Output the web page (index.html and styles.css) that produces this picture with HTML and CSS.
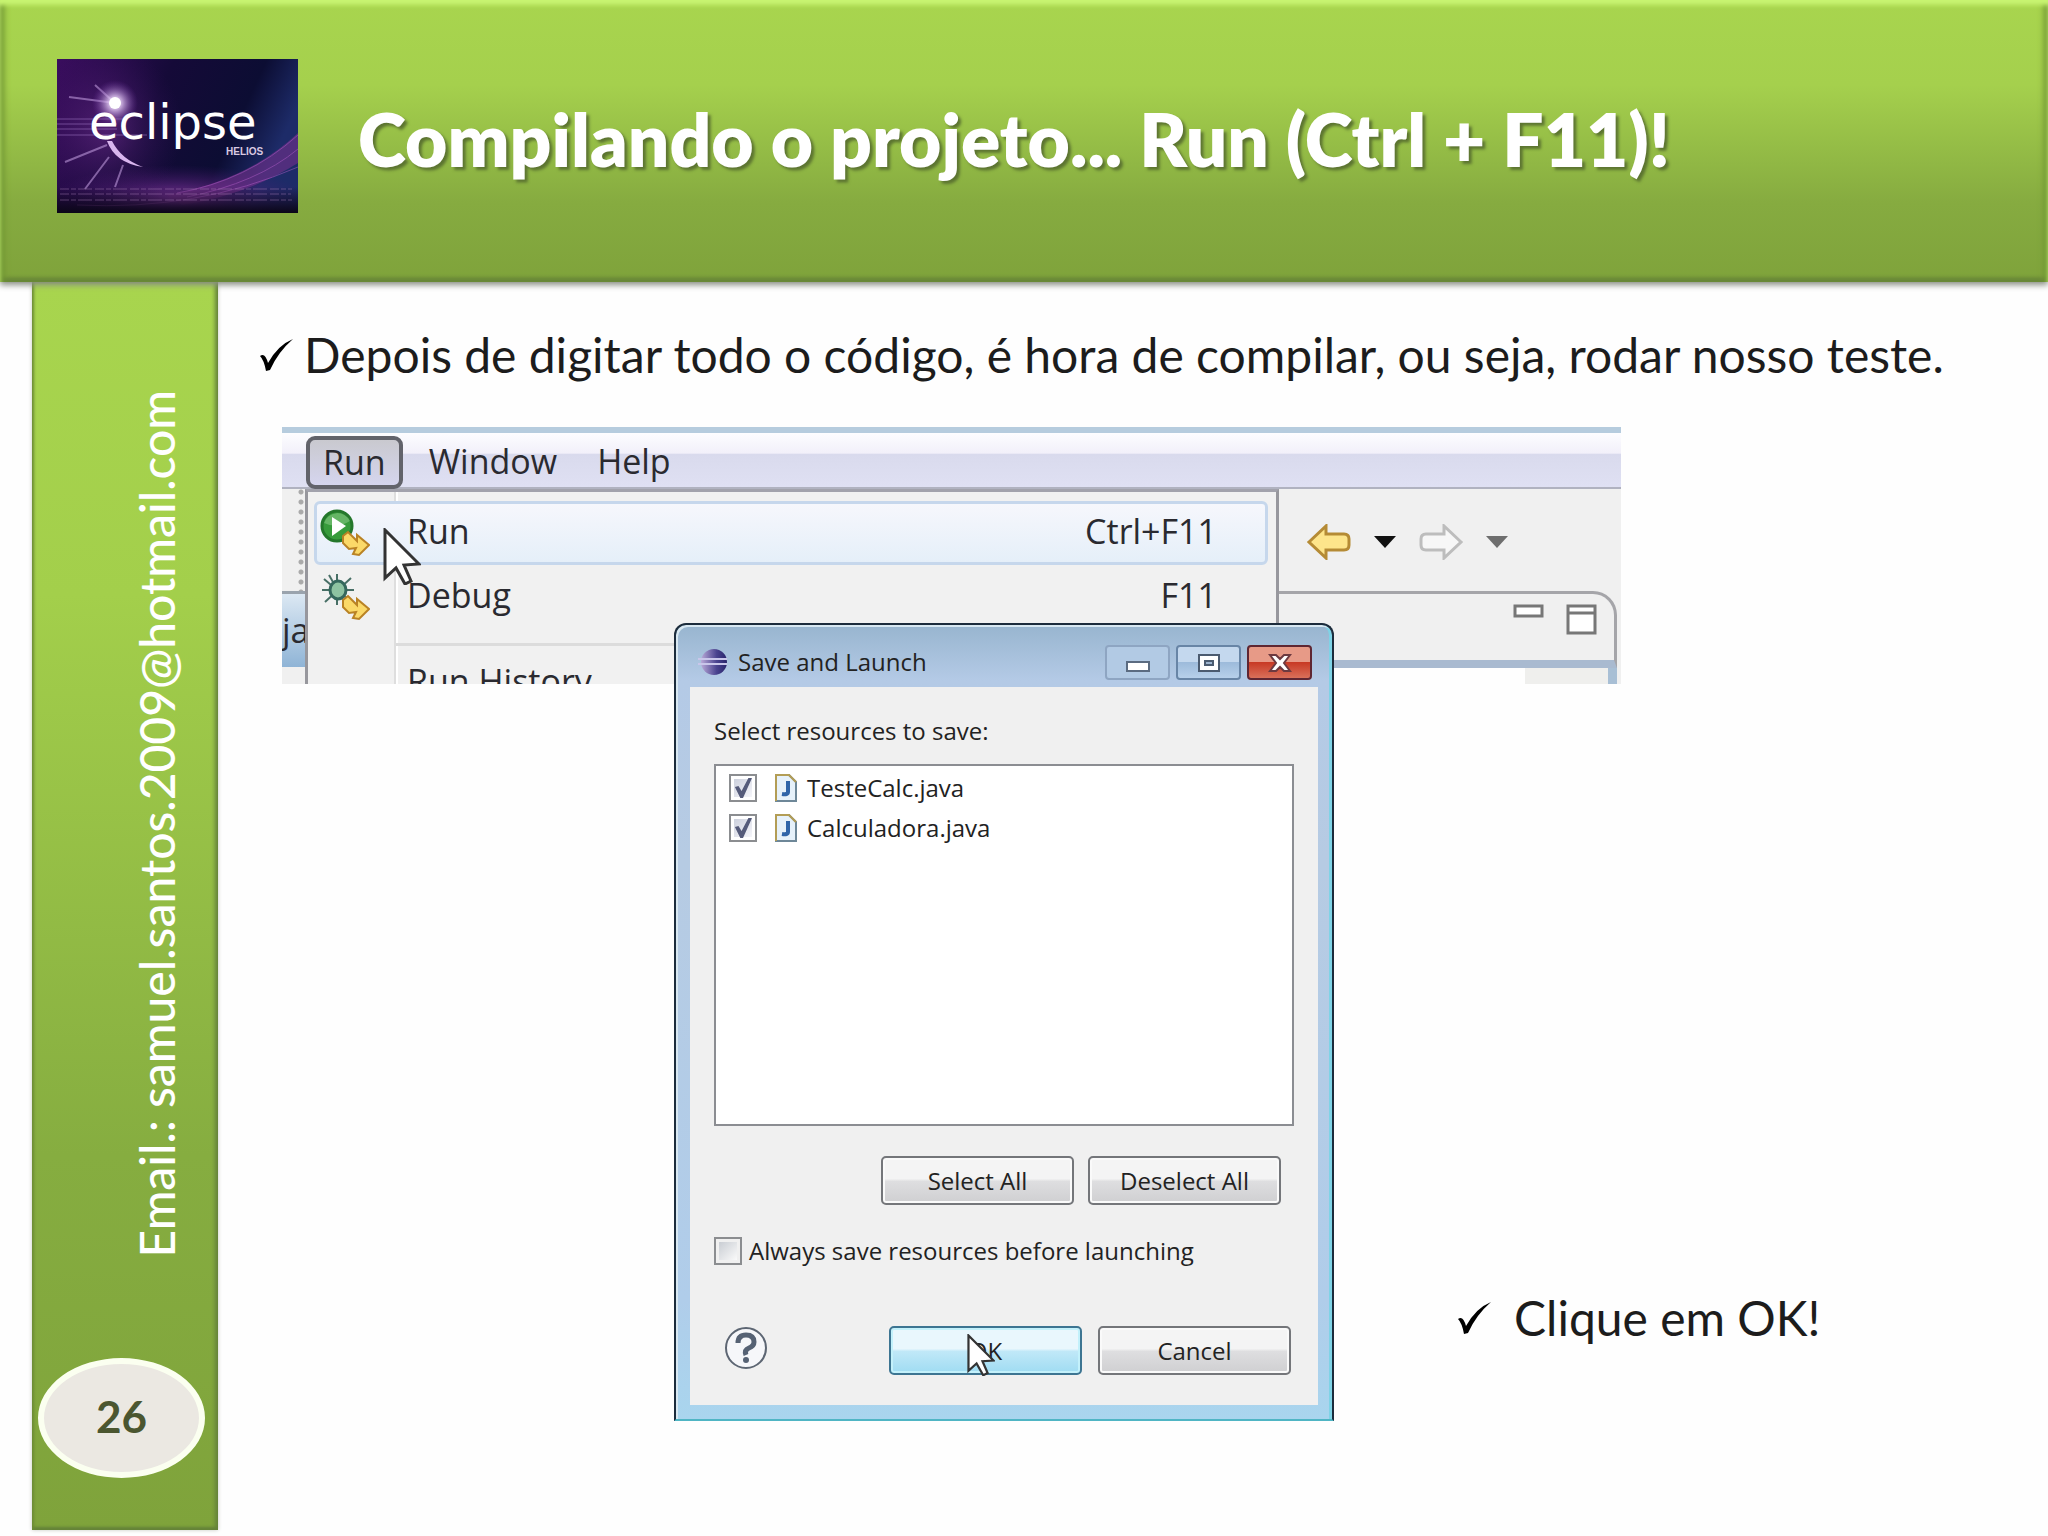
FILE: index.html
```html
<!DOCTYPE html>
<html lang="pt-BR">
<head>
<meta charset="utf-8">
<title>Compilando o projeto</title>
<link rel="stylesheet" href="styles.css">
</head>
<body>
<header class="banner">
  <svg class="logo" viewBox="0 0 241 154" role="img" aria-label="eclipse helios">
    <defs>
      <linearGradient id="sky" x1="0" y1="0" x2="1" y2="0.3">
        <stop offset="0" stop-color="#3a0d5e"/><stop offset="0.45" stop-color="#150a38"/><stop offset="0.8" stop-color="#0c0d33"/><stop offset="1" stop-color="#1d2b68"/>
      </linearGradient>
      <radialGradient id="star"><stop offset="0" stop-color="#fff"/><stop offset="0.3" stop-color="#e3c9f5" stop-opacity="0.8"/><stop offset="1" stop-color="#6a2c9c" stop-opacity="0"/></radialGradient>
      <radialGradient id="glow"><stop offset="0" stop-color="#8b3aa8" stop-opacity="0.9"/><stop offset="1" stop-color="#4a1670" stop-opacity="0"/></radialGradient>
      <linearGradient id="fade" x1="0" y1="0" x2="0" y2="1"><stop offset="0" stop-color="#0b0618" stop-opacity="0"/><stop offset="1" stop-color="#0b0618"/></linearGradient>
    </defs>
    <rect width="241" height="154" fill="url(#sky)"/>
    <ellipse cx="120" cy="140" rx="130" ry="34" fill="url(#glow)"/>
    <ellipse cx="50" cy="70" rx="75" ry="85" fill="url(#glow)" opacity="0.5"/>
    <path d="M110 136Q190 122 241 74V104Q190 136 125 146Z" fill="#74308c" opacity="0.6"/>
    <g fill="none" stroke="#b05cc6" opacity="0.5"><path d="M120 134Q190 122 241 76"/><path d="M130 138Q200 124 241 90"/><path d="M20 146Q140 152 241 108"/></g>
    <g stroke="#c9a4e6" stroke-width="2" opacity="0.55"><path d="M58 44L12 38M58 44L38 26M50 86L8 103M52 98L28 130M66 106L58 128"/></g>
    <g stroke="#a980cf" opacity="0.5"><path d="M0 60H70M0 65H60M0 70H60M0 76H90"/></g>
    <path d="M50 82Q58 104 86 108Q64 100 55 82Z" fill="#d9b6ee"/>
    <circle cx="58" cy="44" r="23" fill="url(#star)"/><circle cx="58" cy="44" r="6" fill="#fff"/>
    <rect y="128" width="241" height="26" fill="url(#fade)"/>
    <g stroke="#b78cc4" stroke-dasharray="9 2 5 2 14 3" opacity="0.4"><path d="M3 130H235M3 135H234M3 141H235"/></g>
    <text class="logo-name" x="32" y="80">eclipse</text>
    <text class="logo-sub" x="169" y="96">HELIOS</text>
  </svg>
  <h1 class="title">Compilando o projeto... Run (Ctrl + F11)!</h1>
</header>

<div class="page">
  <aside class="side">
    <p class="email">Email.: samuel.santos.2009@hotmail.com</p>
    <div class="number">26</div>
  </aside>

  <main class="content">
    <p class="bullet">
      <svg class="tick" viewBox="0 0 33 32"><path d="M0 17Q5 13 8 24Q18 6 33 0Q18 13 10 31L6 32Q4 21 0 17Z"/></svg>
      <span>Depois de digitar todo o código, é hora de compilar, ou seja, rodar nosso teste.</span>
    </p>

    <div class="stage">
      <section class="ide">
        <nav class="menubar">
          <button class="menu-item menu-open">Run</button>
          <button class="menu-item">Window</button>
          <button class="menu-item">Help</button>
        </nav>
        <div class="ide-body">
          <div class="edge">
            <div class="grip"></div>
            <div class="edge-tab">ja</div>
          </div>
          <div class="menu">
            <button class="row row-hot">
              <svg class="row-icon" viewBox="0 0 50 48">
                <circle cx="17" cy="17" r="15" fill="#379b3b" stroke="#24772b" stroke-width="3"/>
                <path d="M4 14A14 14 0 0 1 30 12Q17 20 4 14Z" fill="#83c682" opacity="0.6"/>
                <path d="M12 8L26 17L12 27Z" fill="#fff"/>
                <path d="M23 27L28 23L37 32V26L49 36L39 46L33 45L36 39L29 40L23 34Z" fill="#fbd968" stroke="#b98224" stroke-width="2"/>
              </svg>
              <span>Run</span><span class="keys">Ctrl+F11</span>
              <svg class="pointer pointer-menu" viewBox="0 0 38 57"><path d="M2 2V50L13 40L22 56L28 53L21 37L36 36Z" fill="#fff" stroke="#333" stroke-width="3"/></svg>
            </button>
            <button class="row">
              <svg class="row-icon" viewBox="0 0 50 48">
                <path d="M17 1V32M4 6L30 28M31 5L5 29M2 17H34M9 2L26 32" stroke="#486f66" stroke-width="2"/>
                <ellipse cx="18" cy="17" rx="8" ry="9" fill="#8ec3a2" stroke="#35685d" stroke-width="3"/>
                <path d="M23 27L28 23L37 32V26L49 36L39 46L33 45L36 39L29 40L23 34Z" fill="#fbd968" stroke="#b98224" stroke-width="2"/>
              </svg>
              <span>Debug</span><span class="keys">F11</span>
            </button>
            <div class="row row-last"><span>Run History</span></div>
          </div>
          <div class="workbench">
            <div class="toolbar">
              <svg class="arrow" viewBox="0 0 44 36"><path d="M2 18L19 2V10H37Q42 10 42 15V21Q42 26 37 26H19V34Z" fill="#fde58b" stroke="#b58b35" stroke-width="3"/></svg>
              <svg class="caret" viewBox="0 0 22 12"><path d="M0 0H22L11 12Z" fill="#111"/></svg>
              <svg class="arrow" viewBox="0 0 44 36"><path d="M42 18L25 2V10H7Q2 10 2 15V21Q2 26 7 26H25V34Z" fill="#f7f7f7" stroke="#bdbdbd" stroke-width="3"/></svg>
              <svg class="caret" viewBox="0 0 22 12"><path d="M0 0H22L11 12Z" fill="#6e6e6e"/></svg>
            </div>
            <div class="view">
              <svg class="view-icon" viewBox="0 0 31 31"><rect x="2" y="2" width="27" height="10" fill="#fff" stroke="#777" stroke-width="3"/></svg>
              <svg class="view-icon" viewBox="0 0 31 31"><path d="M2 2H29V29H2ZM2 9H29" fill="#fff" stroke="#777" stroke-width="3"/></svg>
            </div>
            <div class="ruler"></div>
          </div>
        </div>
      </section>

      <section class="dialog">
        <div class="dialog-bar">
          <svg class="ball" viewBox="0 0 30 28"><defs><linearGradient id="ball"><stop offset="0" stop-color="#b9a9d8"/><stop offset="0.6" stop-color="#4a438f"/><stop offset="1" stop-color="#29246b"/></linearGradient></defs><ellipse cx="16" cy="14" rx="13" ry="13" fill="url(#ball)"/><path d="M0 11H29M0 16H29" stroke="#c9c6ea" stroke-width="2"/></svg>
          <h2 class="dialog-title">Save and Launch</h2>
          <div class="win-buttons">
            <button class="win win-min" aria-label="Minimize"><svg viewBox="0 0 24 20"><rect x="1" y="9" width="22" height="9" fill="#fff" stroke="#5b6b80" stroke-width="2"/></svg></button>
            <button class="win win-max" aria-label="Maximize"><svg viewBox="0 0 24 20"><rect x="2" y="2" width="20" height="16" fill="#fff" stroke="#4b5b70" stroke-width="2"/><rect x="8" y="8" width="8" height="4" fill="#9db4cf" stroke="#4b5b70" stroke-width="2"/></svg></button>
            <button class="win win-close" aria-label="Close"><svg viewBox="0 0 24 20"><path d="M2 2H8L12 6L16 2H22L16 10L22 18H16L12 14L8 18H2L8 10Z" fill="#fff" stroke="#6d3a40" stroke-width="2"/></svg></button>
          </div>
        </div>
        <form class="dialog-body">
          <p class="prompt">Select resources to save:</p>
          <div class="files">
            <label class="file"><input class="box" type="checkbox" checked>
              <svg class="doc" viewBox="0 0 24 30"><path d="M2 2H15L22 9V28H2Z" fill="#e6f1fa" stroke="#6e8798" stroke-width="2"/><path d="M2 28V2H15L22 9" fill="none" stroke="#b39d55" stroke-width="2"/><path d="M14 8V19Q14 22 8 21" fill="none" stroke="#2f64a8" stroke-width="4"/></svg>
              <span>TesteCalc.java</span></label>
            <label class="file"><input class="box" type="checkbox" checked>
              <svg class="doc" viewBox="0 0 24 30"><path d="M2 2H15L22 9V28H2Z" fill="#e6f1fa" stroke="#6e8798" stroke-width="2"/><path d="M2 28V2H15L22 9" fill="none" stroke="#b39d55" stroke-width="2"/><path d="M14 8V19Q14 22 8 21" fill="none" stroke="#2f64a8" stroke-width="4"/></svg>
              <span>Calculadora.java</span></label>
          </div>
          <div class="picks">
            <button class="btn" type="button">Select All</button>
            <button class="btn" type="button">Deselect All</button>
          </div>
          <label class="always"><input class="box" type="checkbox"><span>Always save resources before launching</span></label>
          <div class="actions">
            <button class="help" type="button" aria-label="Help"><svg viewBox="0 0 44 44"><circle cx="22" cy="22" r="20" fill="#f6f7fa" stroke="#5d6673" stroke-width="2"/><path d="M14 17Q14 9 22 9T30 16Q30 20 25 22T22 29" fill="none" stroke="#566274" stroke-width="5"/><circle cx="22" cy="34" r="3" fill="#566274"/></svg></button>
            <button class="btn btn-ok" type="button">OK
              <svg class="pointer pointer-ok" viewBox="0 0 38 57"><path d="M2 2V50L13 40L22 56L28 53L21 37L36 36Z" fill="#fff" stroke="#333" stroke-width="3"/></svg>
            </button>
            <button class="btn" type="button">Cancel</button>
          </div>
        </form>
      </section>

      <p class="bullet note">
        <svg class="tick" viewBox="0 0 33 32"><path d="M0 17Q5 13 8 24Q18 6 33 0Q18 13 10 31L6 32Q4 21 0 17Z"/></svg>
        <span>Clique em OK!</span>
      </p>
    </div>
  </main>
</div>
</body>
</html>
```
FILE: styles.css
```css
* { box-sizing: border-box; }

body {
  margin: 0;
  min-height: 100vh;
  display: flex;
  flex-direction: column;
  background: #fefefe;
  color: #1c1c1c;
  font-family: Lato, "Open Sans", sans-serif;
}

h1, h2, p { margin: 0; }
svg { display: block; flex: none; }
button { font: inherit; color: inherit; margin: 0; padding: 0; border: 0; background: none; }

/* Title band */
.banner {
  position: relative;
  z-index: 1;
  display: flex;
  align-items: flex-start;
  gap: 60px;
  height: 282px;
  padding: 59px 57px 0;
  background: linear-gradient(#a8d54e 0, #a5d04d 30%, #86ab40 72%, #7fa33b 100%);
  box-shadow: inset 0 5px 4px #c9f572, inset 6px 0 6px -2px #6f9433, inset -6px 0 6px -2px #6f9433, inset 0 -4px 4px #64803a, 0 3px 6px #8a8f84;
}
.logo { width: 241px; height: 154px; }
.logo-name { font: 48px "DejaVu Sans", sans-serif; fill: #fff; }
.logo-sub { font: bold 10px "Liberation Sans", sans-serif; fill: #d9c9e2; }
.title {
  padding-top: 40px;
  font-size: 73px;
  line-height: 80px;
  font-weight: 800;
  white-space: nowrap;
  color: #fff;
  text-shadow: 3px 3px 3px #5c7431;
}

/* Sidebar and content */
.page { flex: 1; display: flex; }
.side {
  flex: none;
  width: 186px;
  margin: 0 0 6px 32px;
  padding: 108px 6px 52px;
  display: flex;
  flex-direction: column;
  justify-content: space-between;
  align-items: flex-start;
  background: linear-gradient(#a8d54e 0, #a3cf4b 25%, #86ad40 70%, #7fa33b 100%);
  box-shadow: inset 3px 0 3px -1px #6c8c35, inset -4px 0 4px -1px #64823a, inset 0 -4px 3px -1px #64823a, 0 0 4px #c5c8c0;
}
.email {
  align-self: flex-start;
  margin-left: 89px;
  writing-mode: vertical-rl;
  transform: rotate(180deg);
  font-size: 48px;
  font-weight: 500;
  line-height: 60px;
  white-space: nowrap;
  color: #fff;
}
.number {
  width: 167px;
  height: 120px;
  border: 6px solid #fbfff0;
  border-radius: 50%;
  background: #ebe8e2;
  color: #4b5630;
  font-size: 44px;
  line-height: 104px;
  font-weight: 700;
  text-align: center;
}
.content { flex: 1; min-width: 0; padding: 43px 0 0 42px; }
.bullet {
  display: flex;
  align-items: center;
  gap: 11px;
  font-size: 48px;
  line-height: 60px;
  white-space: nowrap;
}
.tick { width: 33px; height: 32px; fill: #000; }

/* IDE strip with the dialog lying over it */
.stage {
  display: grid;
  grid-template-columns: 392px 660px 287px 1fr;
  margin: 42px 0 0 22px;
}
.ide {
  grid-area: 1 / 1 / 2 / 4;
  height: 257px;
  overflow: hidden;
  display: flex;
  flex-direction: column;
  font-family: "Open Sans", "Noto Sans", sans-serif;
  font-size: 34px;
  line-height: 48px;
  font-weight: 500;
  color: #2a2a30;
}
.menubar {
  flex: none;
  height: 62px;
  padding: 3px 0 0 24px;
  display: flex;
  gap: 12px;
  border-top: 6px solid #b6ccde;
  background: linear-gradient(#fdfdff, #f2f0fa 36%, #d9daed 38%, #dfe0f3 96%, #b0b2c0 97%);
}
.menu-item { height: 53px; padding: 0 14px 3px; line-height: 44px; }
.menu-open {
  padding: 0 13px 3px;
  border: 4px solid #62636b;
  border-radius: 9px;
  background: linear-gradient(#c9c9cf, #d5d5ee);
}
.ide-body { flex: 1; min-height: 0; display: flex; background: #f0f0f0; }
.edge { width: 23px; flex: none; display: flex; flex-direction: column; }
.grip { height: 102px; margin-left: 15px; background: radial-gradient(circle at 4px 5px, #aaa 2px, transparent 3px) 0 18px / 8px 10px; }
.edge-tab { height: 76px; padding-top: 12px; border-top: 3px solid #9aa3ad; background: linear-gradient(#dce8f3, #8fb4d6); overflow: hidden; }
.menu {
  flex: none;
  width: 974px;
  padding: 9px 8px 0 6px;
  border: 3px solid #97979d;
  border-top-color: #a2a2ac;
  border-bottom: 0;
  background: linear-gradient(90deg, #f1f1f1 86px, #dedede 86px, #dedede 88px, #fff 88px, #fff 90px, #f1f1f1 90px);
}
.row {
  position: relative;
  width: 100%;
  height: 64px;
  padding: 0 51px 0 6px;
  display: flex;
  align-items: center;
  text-align: left;
}
.row span { padding-bottom: 5px; }
.row-hot { border: 3px solid #c6d7ec; border-radius: 6px; padding: 0 48px 0 3px; background: linear-gradient(#f6f7fc, #e5eff9); }
.row-icon { width: 50px; height: 48px; margin-right: 37px; }
.keys { margin-left: auto; }
.row-last { height: 60px; width: auto; margin: 14px 0 0 82px; padding: 18px 0 0 11px; border-top: 3px solid #dcdcdc; }
.pointer { position: absolute; z-index: 1; }
.pointer-menu { left: 66px; top: 24px; width: 38px; height: 57px; }
.workbench { flex: 1; display: flex; flex-direction: column; }
.toolbar { height: 102px; flex: none; display: flex; align-items: center; gap: 23px; padding: 4px 0 0 28px; }
.arrow { width: 44px; height: 36px; }
.caret { width: 22px; height: 12px; }
.view {
  flex: none;
  height: 77px;
  display: flex;
  justify-content: flex-end;
  gap: 22px;
  margin-right: 4px;
  padding: 10px 17px 0;
  border-top: 3px solid #a5a5a9;
  border-right: 3px solid #a5a5a9;
  border-bottom: 8px solid #a9bad0;
  border-top-right-radius: 24px;
}
.view-icon { width: 31px; height: 31px; }
.ruler { flex: 1; margin-right: 4px; border-right: 9px solid #a8bfd5; background: linear-gradient(90deg, #fefefe 246px, #efefed 246px); }

/* Dialog window */
.dialog {
  position: relative;
  z-index: 2;
  grid-area: 1 / 2 / 3 / 3;
  margin-top: 196px;
  padding: 0 14px 14px;
  border: 2px solid #1c2c3c;
  border-bottom-color: #4fb5c4;
  border-radius: 12px 12px 0 0;
  background: linear-gradient(#98b5cf 0, #b4cae6 7%, #b6cbe3 30%, #b0cdea 85%, #a9d5ee 100%);
  box-shadow: inset 2px 2px 0 #d8e8f2, inset -3px 0 0 #7fd3e6;
  font-family: "Open Sans", "Noto Sans", sans-serif;
  font-size: 24px;
  line-height: 32px;
  color: #222;
}
.dialog-bar { height: 62px; padding: 20px 6px 0 8px; display: flex; align-items: flex-start; gap: 10px; }
.ball { width: 30px; height: 28px; margin-top: 3px; }
.dialog-title { font-size: 24px; line-height: 34px; font-weight: 400; }
.win-buttons { margin-left: auto; display: flex; gap: 6px; }
.win {
  width: 65px;
  height: 35px;
  display: grid;
  place-items: center;
  border: 2px solid #6885a6;
  border-radius: 4px;
  background: linear-gradient(#c4d8ee 48%, #9dbbdb 50%, #b7d0ea);
}
.win svg { width: 24px; height: 20px; }
.win-min { border-color: #8ea5c2; background: #b2cae4; }
.win-close { border-color: #5f2632; background: linear-gradient(#e79a87 48%, #c83a25 50%, #d9705a); }
.dialog-body { height: 718px; padding: 28px 24px 0; display: flex; flex-direction: column; background: #f0f0f0; }
.files {
  height: 362px;
  margin-top: 17px;
  padding: 2px 13px;
  border: 2px solid #8b8d92;
  background: #fff;
}
.file { height: 40px; display: flex; align-items: center; }
.box {
  appearance: none;
  flex: none;
  width: 28px;
  height: 28px;
  margin: 0;
  padding: 3px;
  border: 2px solid #8b8d90;
  background: linear-gradient(135deg, #c9cdd3, #fafafa) content-box;
}
.box:checked {
  position: relative;
  background: linear-gradient(135deg, #cdd1dd, #f5f5fa) content-box;
}
.box:checked::after {
  content: "";
  position: absolute;
  inset: 2px 3px;
  background: #555b7a;
  clip-path: polygon(5% 45%, 25% 40%, 42% 65%, 80% 0, 100% 0, 50% 100%, 35% 100%);
}
.doc { width: 24px; height: 30px; margin: 0 9px 0 17px; }
.picks { display: flex; justify-content: flex-end; gap: 14px; margin: 30px 13px 0 0; }
.btn {
  position: relative;
  width: 193px;
  height: 49px;
  border: 2px solid #74767a;
  border-radius: 5px;
  background: linear-gradient(#f4f4f4 46%, #dedee0 52%, #cfcfd1);
  box-shadow: inset 0 0 0 2px #fafafa;
}
.btn-ok { border-color: #3d7592; background: linear-gradient(#e9f7fd 46%, #c0e8f8 52%, #9fdcf2); box-shadow: inset 0 0 0 2px #c3f1fb; }
.always { margin-top: 30px; display: flex; align-items: center; gap: 7px; }
.actions { display: flex; align-items: flex-start; gap: 16px; margin: 59px 3px 0 0; }
.help { width: 44px; height: 44px; margin: 0 auto 0 10px; }
.pointer-ok { left: 76px; top: 6px; width: 28px; height: 42px; }

.note { grid-area: 1 / 3 / 3 / 5; align-self: end; justify-self: start; gap: 23px; margin: 0 0 73px 124px; }
```
